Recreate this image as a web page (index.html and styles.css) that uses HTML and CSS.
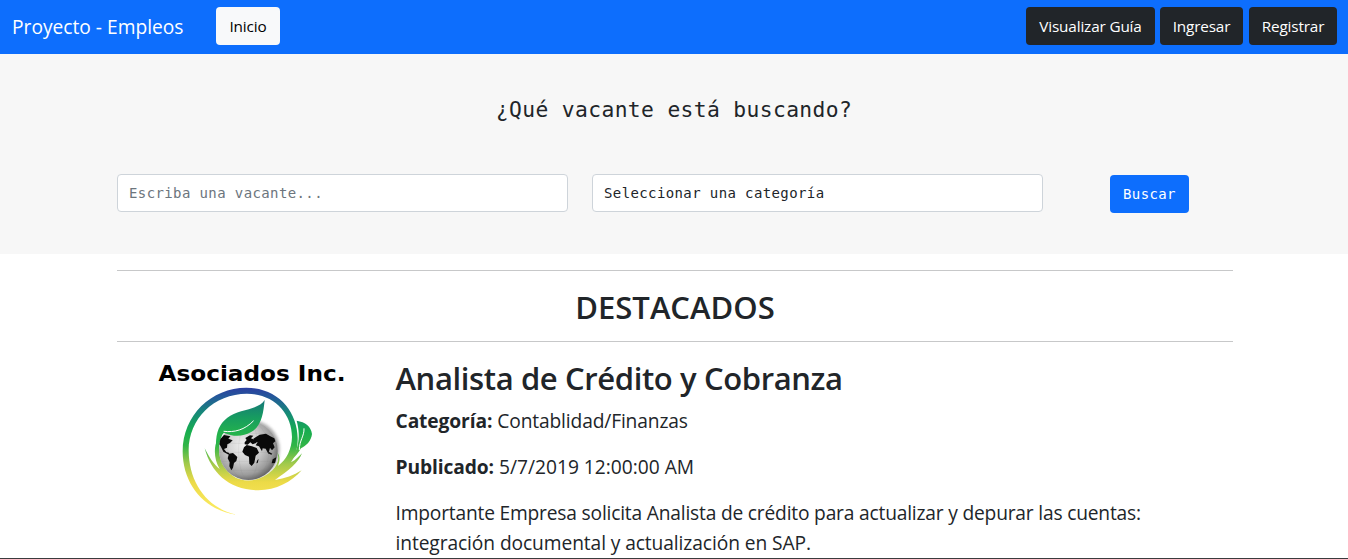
FILE: index.html
```html
<!DOCTYPE html>
<html lang="es">
<head>
<meta charset="utf-8">
<title>Proyecto - Empleos</title>
<link rel="stylesheet" href="styles.css">
</head>
<body>
<nav class="navbar">
  <a class="brand"><span>Proyecto - Empleos</span></a>
  <a class="btn btn-light"><span>Inicio</span></a>
  <div class="nav-actions">
    <a class="btn btn-dark guide"><span>Visualizar Guía</span></a>
    <a class="btn btn-dark login"><span>Ingresar</span></a>
    <a class="btn btn-dark register"><span>Registrar</span></a>
  </div>
</nav>
<section class="search">
  <h4 class="search-title"><span>¿Qué vacante está buscando?</span></h4>
  <form class="search-form">
    <input class="field" type="text" placeholder="Escriba una vacante...">
    <div class="field select"><span>Seleccionar una categoría</span></div>
    <div class="submit"><button class="btn btn-primary" type="button"><span>Buscar</span></button></div>
  </form>
</section>
<main class="container">
  <h2 class="section-title"><span>DESTACADOS</span></h2>
  <article class="job">
    <svg class="logo" viewBox="140 350 230 190" width="230" height="190" role="img" aria-label="Asociados Inc.">
      <defs>
        <linearGradient id="ring" gradientUnits="userSpaceOnUse" x1="0" y1="24" x2="0" y2="400">
          <stop offset="0" stop-color="#2b3fa0"/>
          <stop offset=".07" stop-color="#24589a"/>
          <stop offset=".2" stop-color="#168a78"/>
          <stop offset=".34" stop-color="#17ac50"/>
          <stop offset=".46" stop-color="#31b547"/>
          <stop offset=".6" stop-color="#9fc94b"/>
          <stop offset=".75" stop-color="#ecda47"/>
          <stop offset="1" stop-color="#fcec63"/>
        </linearGradient>
        <linearGradient id="leaf" gradientUnits="userSpaceOnUse" x1="0" y1="60" x2="0" y2="165">
          <stop offset="0" stop-color="#16777a"/>
          <stop offset=".5" stop-color="#179c60"/>
          <stop offset="1" stop-color="#25b44b"/>
        </linearGradient>
        <radialGradient id="globe" cx=".42" cy=".4" r=".64">
          <stop offset="0" stop-color="#f1f1f1"/>
          <stop offset=".45" stop-color="#d0d0d0"/>
          <stop offset=".8" stop-color="#9b9b9b"/>
          <stop offset="1" stop-color="#5d5d5d"/>
        </radialGradient>
        <filter id="soft" x="-20%" y="-20%" width="140%" height="140%"><feGaussianBlur stdDeviation="5"/></filter>
      </defs>
      <text class="logo-text" x="158.500" y="380.500" textLength="187" lengthAdjust="spacingAndGlyphs">Asociados Inc.</text>
      <g transform="translate(170 380) scale(.33333)">
        <circle cx="241" cy="208" r="88" fill="#777" opacity=".6" filter="url(#soft)"/>
        <path fill="url(#ring)" d="M200 404C104 392 38 314 38 214C38 106 124 23 229 23C324 23 382 94 383 174C384 207 374 231 363 247C379 239 387 229 396 220C385 249 357 270 315 300C345 296 371 286 395 271C364 306 319 331 265 331C177 331 123 277 104 205C119 235 132 254 149 267C124 224 133 173 165 151C133 195 146 260 188 287C224 312 273 303 307 271C325 252 329 232 321 217C331 228 330 241 324 258C350 238 365 208 366 171C366 98 310 41 231 41C132 41 56 116 56 211C56 308 112 386 200 404Z"/>
        <circle cx="235" cy="212" r="88" fill="url(#globe)"/>
        <g fill="none" stroke="#777" stroke-opacity=".22" stroke-width="1.500">
          <ellipse cx="235" cy="212" rx="29" ry="88"/><ellipse cx="235" cy="212" rx="62" ry="88"/>
          <path d="M149 190H321M147 217H323M153 244H317M170 271H300M165 160H305"/>
        </g>
        <g fill="#090909">
          <path d="M151 177L162 165L181 169L175 176L188 181L180 189L172 193L171 203L162 207L169 216L178 219L176 224L160 215L152 199L148 193Z"/>
          <path d="M177 221L189 219L202 231L199 243L192 249L189 263L184 271L178 259L179 247L173 235Z"/>
          <path d="M222 202L230 195L246 199L260 204L267 218L257 227L253 248L245 258L238 251L237 230L225 225L217 215Z"/>
          <path d="M224 187L230 180L226 174L240 166L250 167L243 175L255 180L260 188L248 193L241 187L233 194L224 193Z"/>
          <path d="M250 176L269 164L288 161L301 169L313 175L316 184L309 190L314 202L306 211L300 203L295 221L287 206L278 205L276 214L267 199L257 196L263 187L252 185Z"/>
          <path d="M262 241L266 237L263 249L259 250ZM296 215L307 221L304 224L294 220ZM308 238L319 232L315 249L305 250Z"/>
        </g>
        <path fill="url(#leaf)" d="M284 60C265 91 204 87 172 113C147 133 137 157 138 200C143 181 150 167 162 158C188 171 220 170 242 157C275 140 280 99 284 60Z"/>
        <path fill="none" stroke="#fff" stroke-width="3" stroke-linecap="round" d="M162 154C193 158 224 150 250 123"/>
        <path fill="url(#ring)" d="M380 122C406 126 423 139 426 162C424 183 408 198 393 205C385 220 374 232 362 243C381 211 395 180 380 122Z"/>
        <path fill="none" stroke="#fff" stroke-width="3" d="M388 210C388 181 403 169 402 145"/>
      </g>
    </svg>
    <div class="job-body">
      <h2 class="job-title"><span>Analista de Crédito y Cobranza</span></h2>
      <p><b>Categoría:</b> <span class="cat">Contablidad/Finanzas</span></p>
      <p><b>Publicado:</b> <span>5/7/2019 12:00:00 AM</span></p>
      <p><span class="desc-lead">Importante Empresa solicita Analista de crédito para actualizar y depurar las cuentas:</span><br><span class="desc-rest">integración documental y actualización en SAP.</span></p>
    </div>
  </article>
</main>
</body>
</html>
```
FILE: styles.css
```css
* { box-sizing: border-box; }
body {
  margin: 0;
  height: 559px;
  overflow: hidden;
  display: flex;
  flex-direction: column;
  background: #fff;
  color: #212529;
  font-family: "Open Sans", "Noto Sans", sans-serif;
  border-bottom: 1px solid #3a3b3e;
}
h2, h4, p { margin: 0; }
.navbar {
  flex: none;
  height: 54px;
  padding: 0 11px 2px 12px;
  display: flex;
  align-items: center;
  background: #0d6efd;
}
.brand { width: 204px; color: #fff; font-size: 19.2px; white-space: nowrap; }
.btn {
  height: 38px;
  display: flex;
  align-items: center;
  justify-content: center;
  border: 0;
  border-radius: 4px;
  font-size: 15.3px;
  letter-spacing: -.15px;
  white-space: nowrap;
}
.btn-light { width: 64px; background: #f8f9fa; color: #000; }
.btn-dark { background: #212529; color: #fff; }
.nav-actions { margin-left: auto; display: flex; }
.guide { width: 129px; margin-right: 5px; }
.login { width: 83px; margin-right: 6px; }
.register { width: 88px; }
.search {
  flex: none;
  height: 200px;
  padding-top: 41px;
  background: #f7f7f7;
  font-family: "DejaVu Sans Mono", monospace;
}
.search-title {
  height: 29px;
  line-height: 29px;
  text-align: center;
  font-size: 21.3px;
  font-weight: 400;
  letter-spacing: .37px;
}
.search-form {
  width: 1140px;
  margin: 50px 0 0 105px;
  padding-left: 12px;
  display: grid;
  grid-template-columns: 451px 451px 190px;
  column-gap: 24px;
}
.submit { padding: 1px 0 0 43px; }
.field {
  height: 38px;
  width: 100%;
  padding: 0 11px;
  border: 1px solid #ced4da;
  border-radius: 4px;
  background: #fff;
  color: #212529;
  font: 14px/36px "DejaVu Sans Mono", monospace;
  letter-spacing: .39px;
}
.field::placeholder { color: #6c757d; opacity: 1; }
.btn-primary {
  width: 79px;
  padding: 0;
  background: #0d6efd;
  color: #fff;
  font: 14px "DejaVu Sans Mono", monospace;
  letter-spacing: .39px;
}
.container { width: 1116px; margin: 16px 0 0 117px; }
.section-title {
  height: 72px;
  line-height: 72px;
  border-top: 1px solid #c7c8c9;
  border-bottom: 1px solid #c7c8c9;
  text-align: center;
  font-size: 31px;
  font-weight: 600;
}
.job { display: flex; padding: 8px 0 0 23px; }
.logo { flex: none; display: block; }
.logo-text { font: bold 22px "DejaVu Sans", sans-serif; }
.job-body { padding: 9px 0 0 25.5px; font-size: 19.2px; line-height: 30px; white-space: nowrap; }
.job-title { height: 47px; line-height: 38px; font-size: 31px; font-weight: 600; letter-spacing: -.38px; }
.job-body p { margin-bottom: 16px; }
.job-body b { letter-spacing: -.1px; }
.cat { letter-spacing: -.14px; }
.desc-lead { letter-spacing: -.19px; }
.desc-rest { letter-spacing: -.09px; }
```
